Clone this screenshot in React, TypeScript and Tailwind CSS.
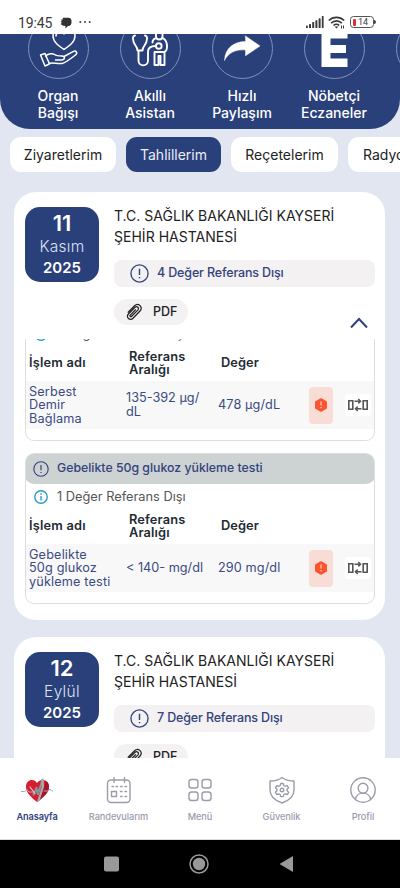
import type { ReactNode } from "react";
import clsx from "clsx";

type TestRow = {
  name: string[];
  range: string[];
  value: string;
};

const IRON_ROW: TestRow = {
  name: ["Serbest", "Demir", "Bağlama"],
  range: ["135-392 µg/", "dL"],
  value: "478 µg/dL",
};

const GLUCOSE_ROW: TestRow = {
  name: ["Gebelikte", "50g glukoz", "yükleme testi"],
  range: ["< 140- mg/dl"],
  value: "290 mg/dl",
};

function AlertCircle({ className }: { className?: string }) {
  return (
    <svg viewBox="0 0 20 20" fill="none" stroke="currentColor" className={className}>
      <circle cx="10" cy="10" r="9" strokeWidth="1.4" />
      <path d="M10 5v6.5M10 13.6v1.5" strokeWidth="1.5" />
    </svg>
  );
}

function PaperClip() {
  return (
    <svg
      viewBox="0 0 18 18"
      fill="none"
      stroke="#222"
      strokeWidth="1.25"
      strokeLinecap="round"
      strokeLinejoin="round"
      className="h-[18px] w-[18px]"
    >
      <path d="M3.2 9.2 9.6 2.8c3.6-3.6 9 1.400 5.400 5.200l-7 7.200c-3 3-7.600-1-4.600-4.200l6.600-6.600c2-2 4.800.6 2.800 2.700L6.600 13.300c-1 1-2.200-.2-1.300-1.200l5.200-5.300" />
    </svg>
  );
}

function StatusBar() {
  return (
    <div className="flex h-[34px] shrink-0 items-start bg-white pl-[18px] pr-6 pt-[14px] text-[#3a3a3a]">
      <span className="w-[35px] whitespace-nowrap font-['Roboto'] text-[14px] leading-[18px] tracking-[-0.1px]">
        19:45
      </span>
      <svg viewBox="0 0 12 12" className="ml-[7px] mt-[3px] h-3 w-3" fill="#333">
        <path d="M3 .8h5.5A3.300 3.300 0 0 1 11.500 4v1.600A3.400 3.400 0 0 1 8 9l-2.600 2.500V9C2.500 9 1 8 .8 6.500L2 6 .5 4.800 2 4 .8 2.800l1.700-.4z" />
      </svg>
      <svg viewBox="0 0 12 4" className="ml-[7px] mt-[6px] h-1 w-3" fill="#444">
        <circle cx="1.3" cy="2" r="1" />
        <circle cx="6" cy="2" r="1" />
        <circle cx="10.7" cy="2" r="1" />
      </svg>
      <div className="flex-1" />
      <svg viewBox="0 0 18 12" className="mt-[2px] h-3 w-[18px]" fill="#3a3a3a">
        <rect x="0" y="9.5" width="1.8" height="2.5" rx=".6" />
        <rect x="3" y="8" width="2" height="4" rx=".6" />
        <rect x="6.2" y="6" width="2" height="6" rx=".6" />
        <rect x="9.4" y="4.2" width="2" height="7.8" rx=".6" />
        <rect x="12.6" y="2.3" width="2" height="9.7" rx=".6" />
        <rect x="15.8" y="0" width="1.8" height="12" rx=".6" />
      </svg>
      <svg
        viewBox="0 0 17 13"
        className="ml-[4px] mt-[2px] h-[13px] w-[17px]"
        fill="none"
        stroke="#3a3a3a"
        strokeWidth="1.7"
      >
        <path d="M.8 4.500a11 11 0 0 1 15.400 0M3.200 7.200a7.300 7.300 0 0 1 10.600 0M5.600 9.500a4 4 0 0 1 5.600 0" />
        <path d="M6.500 10.500h4l-2 2z" fill="#3a3a3a" stroke="none" />
        <path d="M13.500 9.500v3M15.500 9.500v3" strokeWidth="1" />
      </svg>
      <div className="ml-[5px] mt-[2px] flex h-[12px] w-[24px] items-center rounded-[3.5px] border border-[#555] pl-[2px]">
        <div className="h-[7px] w-[3px] rounded-[1px] bg-[#d93030]" />
        <span className="ml-[2px] font-['Roboto'] text-[9px] leading-[10px]">14</span>
      </div>
      <div className="mt-[6px] h-1 w-[2px] rounded-r bg-[#444]" />
    </div>
  );
}

function Shortcut({ lines, children }: { lines: string[]; children?: ReactNode }) {
  return (
    <div className="flex w-[92px] shrink-0 flex-col items-center">
      <div className="flex h-[61px] w-[61px] items-center justify-center rounded-full border border-[#8290b8]">
        <svg
          viewBox="0 0 61 61"
          className="h-[61px] w-[61px] shrink-0"
          fill="none"
          stroke="#fff"
          strokeWidth="1.5"
          strokeLinecap="round"
          strokeLinejoin="round"
        >
          {children}
        </svg>
      </div>
      <div className="mt-[9px] whitespace-nowrap text-center text-[14px] font-medium leading-[16.5px] text-white">
        {lines.map((line) => (
          <div key={line}>{line}</div>
        ))}
      </div>
    </div>
  );
}

function ShortcutHeader() {
  return (
    <div className="h-[95px] shrink-0 overflow-hidden rounded-b-[30px] bg-[#2a407b]">
      <div className="-mt-[16px] flex pl-[12px]">
        <Shortcut lines={["Organ", "Bağışı"]}>
          <path d="M36 31.500C31 28 25 24 25 18c0-6 8-8 11-2 3-6 11-4 11 2 0 6-6 10-11 13.500zM28 18c0-2 1-3 2.500-3" />
          <path d="M12.500 37l4.500-1.500 4.500 10.500-4.500 2zM17.500 38c3-2.500 7-3 9-1.500 2 1.500 4.500 1.500 7.500 1.500 3.500 0 3 4-.5 4h-6M21 45.500c4-1.500 7 .5 13 0 2.500-.3 9-5 13.500-8.500 2.500-2 .5-5-2-3.700l-9.500 5.200" />
        </Shortcut>
        <Shortcut lines={["Akıllı", "Asistan"]}>
          <g strokeWidth="1.9">
            <path d="M15 17.500c-3 0-2.500 6 .5 10 1.500 2 2 3.500 2 5h5c0-1.500.5-3 2-5 3-4 3.500-10 .5-10" />
            <path d="M18.500 33v9.500c0 6.500 9.500 6.500 9.500 0V34c0-4.500 3-6 7.500-6" />
            <circle cx="38.800" cy="28" r="2.800" />
            <path d="M36 14v4.500c0 4 6.500 4 6.500 0V14M35 20.500c-2 1-2.500 2.500-2.500 4M43.500 20.500c2.500 1.500 3.500 4 3.500 8 0 3.500-1.500 5.500-3.500 5.500H34.500v13h4V38h2v9h4V34" />
          </g>
        </Shortcut>
        <Shortcut lines={["Hızlı", "Paylaşım"]}>
          <path
            d="M33.500 18l14.500 10-14.500 9.800v-5.800C24 31 16 35 12.500 42.500 13 30 22 23.500 33.500 23.500z"
            fill="#fff"
            strokeWidth=".5"
          />
        </Shortcut>
        <Shortcut lines={["Nöbetçi", "Eczaneler"]}>
          <path
            d="M17.500 6h26v14.500h-17v6.500h15.500v8h-15.500v5.500h17v8.500h-26z"
            fill="#fff"
            stroke="none"
          />
        </Shortcut>
        <Shortcut lines={[]} />
      </div>
    </div>
  );
}

function Tab({ label, active, className }: { label: string; active?: boolean; className: string }) {
  return (
    <button
      className={clsx(
        "h-[35px] shrink-0 whitespace-nowrap rounded-[11px] pb-px text-center text-[14px]",
        active ? "bg-[#2a407b] text-[#e9edf8]" : "bg-white text-[#222]",
        className
      )}
    >
      {label}
    </button>
  );
}

function DateBadge({ day, month, year }: { day: string; month: string; year: string }) {
  return (
    <div className="flex h-[75px] w-[74px] shrink-0 flex-col items-center rounded-[15px] bg-[#2a407b] pt-[3px] text-white">
      <div className="text-[22px] font-semibold leading-[26px]">{day}</div>
      <div className="text-[15.5px] font-light leading-[21px] tracking-[0.3px] text-[#dde3f2]">{month}</div>
      <div className="text-[15px] font-semibold leading-[21px]">{year}</div>
    </div>
  );
}

function ResultSummary(props: { day: string; month: string; year: string; outOfRange: number }) {
  return (
    <div className="flex pl-[11px] pr-[10px] pt-[15px]">
      <DateBadge day={props.day} month={props.month} year={props.year} />
      <div className="ml-[15px] flex-1">
        <div className="-mt-[1px] whitespace-nowrap text-[14px] leading-[20.5px] tracking-[0.02px] text-[#222]">
          T.C. SAĞLIK BAKANLIĞI KAYSERİ
          <br />
          ŞEHİR HASTANESİ
        </div>
        <div className="mt-[13px] flex h-[27px] items-center rounded-[8px] bg-[#f4f1f3] pl-[16px] text-[#33437c]">
          <AlertCircle className="h-[19px] w-[19px]" />
          <span className="ml-[8px] whitespace-nowrap text-[12.5px] font-medium tracking-[-0.15px]">
            {props.outOfRange} Değer Referans Dışı
          </span>
        </div>
        <div className="mt-[12px] flex h-[26px] w-[74px] items-center rounded-full bg-[#f4f1f3] pl-[11px]">
          <PaperClip />
          <span className="ml-[10px] text-[12.5px] font-medium text-[#222]">PDF</span>
        </div>
      </div>
    </div>
  );
}

function CompareIcon() {
  return (
    <div className="flex h-[22px] w-[26px] items-center justify-center rounded bg-white">
      <svg viewBox="0 0 20 14" fill="none" stroke="#555" strokeWidth="1.6" className="h-[14px] w-5">
        <path d="M.8 2.800h4v8.400h-4zM15.200 2.800h4v8.400h-4z" />
        <path d="M6.500 3.200h5.500M10.300 1l2.200 2.200-2.200 2.200M13.500 10.800h-5.500M9.700 8.600l-2.200 2.200 2.200 2.200" strokeWidth="1.5" />
      </svg>
    </div>
  );
}

// Without a title the panel is the scrolled-up one: only its lower part is in view.
function TestPanel({ title, row }: { title?: string; row: TestRow }) {
  return (
    <div
      className={clsx(
        "overflow-hidden border border-[#dcdfe2] bg-white",
        title ? "h-[151px] rounded-[9px]" : "h-[120px] rounded-b-[9px] border-t-0"
      )}
    >
      {title && (
        <div className="-mx-px -mt-px flex h-[31px] items-center rounded-[9px] bg-[#cdd2d3] pl-[8px] text-[#33437c]">
          <AlertCircle className="h-4 w-4" />
          <span className="ml-[8px] whitespace-nowrap text-[12.3px] font-medium">{title}</span>
        </div>
      )}
      <div className="flex h-[24px] items-center pl-[8px] pt-px">
        <svg viewBox="0 0 14 14" fill="none" stroke="#2b9cc4" strokeWidth="1.4" className="h-[14px] w-[14px]">
          <circle cx="7" cy="7" r="6.2" />
          <path d="M7 3.300v1.400M7 6v4.500" />
        </svg>
        <span className="ml-[9px] whitespace-nowrap text-[12.8px] text-[#555]">
          1 Değer Referans Dışı
        </span>
      </div>
      <div className="flex h-[36px] items-center pl-[3px] text-[12.8px] font-semibold leading-[13.5px] text-[#222b33]">
        <div className="w-[100px] tracking-[0.2px]">İşlem adı</div>
        <div className="w-[92px] tracking-[0.15px]">
          Referans
          <br />
          Aralığı
        </div>
        <div className="tracking-[0.1px]">Değer</div>
      </div>
      <div className="flex h-[48px] items-center bg-[#f8f8f9] pl-[3px] text-[12.7px] leading-[13.3px] text-[#3b4b80]">
        <div className="w-[97px] whitespace-nowrap tracking-[0.15px]">
          {row.name.map((line) => (
            <div key={line}>{line}</div>
          ))}
        </div>
        <div className="w-[92px] whitespace-nowrap leading-[14.5px]">
          {row.range.map((line) => (
            <div key={line}>{line}</div>
          ))}
        </div>
        <div className="w-[91px] whitespace-nowrap tracking-[0.1px]">{row.value}</div>
        <div className="flex h-[37px] w-[24px] items-center justify-center rounded-[4px] bg-[#f8dcd6]">
          <svg viewBox="0 0 14 14" className="h-[14px] w-[14px]">
            <path
              d="M7 1l5.200 3v6L7 13l-5.200-3V4z"
              fill="#fb5430"
              stroke="#fb5430"
              strokeWidth="1.5"
              strokeLinejoin="round"
            />
            <path d="M7 3.500v4M7 9v1.300" stroke="#fbd5cb" strokeWidth="1.2" />
          </svg>
        </div>
        <div className="ml-[12px]">
          <CompareIcon />
        </div>
      </div>
    </div>
  );
}

function NavItem({ label, active, children }: { label: string; active?: boolean; children: ReactNode }) {
  return (
    <div className="flex w-[81.5px] shrink-0 flex-col items-center pt-[17px]">
      <svg
        viewBox="0 0 32 30"
        className="h-[30px] w-8"
        fill="none"
        stroke="#9a9cab"
        strokeWidth="1.4"
        strokeLinecap="round"
        strokeLinejoin="round"
      >
        {children}
      </svg>
      <div
        className={clsx(
          "mt-[5px] whitespace-nowrap text-[9.2px] leading-[14px]",
          active ? "font-semibold tracking-[-0.1px] text-[#33437c]" : "font-medium tracking-[-0.05px] text-[#9a9cab]"
        )}
      >
        {label}
      </div>
    </div>
  );
}

function BottomNav() {
  return (
    <div className="flex h-[82px] shrink-0 justify-center overflow-hidden border-b border-[#dcdce0] bg-white">
      <NavItem label="Anasayfa" active>
        <path d="M16 27C10 22 5 18 5 11.500c0-7 8-8.500 11-3.500 3-5 12-3.500 12 3.500C28 18 22 22 16 27z" fill="#d51f30" stroke="none" />
        <path d="M17 26.500c6-5 11-8.500 11-15 0-3-1.500-5-4-6 1 8-6 11-7 21z" fill="#a91427" stroke="none" />
        <path d="M0 16.500h4l2-2 2 2.500h4M23 16h4l2-2 1.500 2h1.500" stroke="#a8adaf" strokeWidth="1" />
        <path d="M12.500 19.500l3-6.500 1.500 6 4.500-14" stroke="#8a9496" strokeWidth="2.2" />
        <path d="M21.500 4.500l.5 7-4.500 14" stroke="#a7afb1" strokeWidth="2.2" />
        <path d="M9 12l5 6.500" stroke="#e9c7ca" strokeWidth="1.2" />
      </NavItem>
      <NavItem label="Randevularım">
        <rect x="4.5" y="5" width="22.5" height="22.5" rx="3.5" />
        <path d="M11 2.500v5M21.500 2.500v5M8.500 16.500h5v5h-5z" />
        <path d="M9 11.500h1.500M13 11.500h1.500M17.500 11.500H19M22 11.500h1.500M17.500 16.500H19M22 16.500h1.500M17.500 21.500H19M22 21.500h1.500" />
      </NavItem>
      <NavItem label="Menü">
        <rect x="5" y="4.5" width="9" height="8.5" rx="2.5" />
        <rect x="18" y="4.5" width="9" height="8.5" rx="2.5" />
        <rect x="5" y="17" width="9" height="8.5" rx="2.5" />
        <rect x="18" y="17" width="9" height="8.5" rx="2.5" />
      </NavItem>
      <NavItem label="Güvenlik">
        <path d="M16 2.500c3 2.500 7 3.500 12 3.500v9c0 6-5 10.500-12 13C9 25.500 4 21 4 15V6c5 0 9-1 12-3.500z" />
        <path d="M14.800 8.500h2.400l.6 2 1.500.8 2-.7 1.300 2.200-1.500 1.500v1.500l1.500 1.500-1.300 2.200-2-.7-1.500.8-.6 2h-2.400l-.6-2-1.500-.8-2 .7-1.300-2.200 1.500-1.500v-1.500l-1.500-1.500 1.300-2.200 2 .7 1.500-.8z" />
        <circle cx="16" cy="15" r="1.8" />
      </NavItem>
      <NavItem label="Profil">
        <circle cx="16" cy="15" r="12.2" />
        <circle cx="16" cy="13.2" r="4.9" />
        <path d="M8.500 24.500c.5-8.500 14.500-8.500 15 0" />
      </NavItem>
    </div>
  );
}

function SystemNav() {
  return (
    <div className="flex h-12 shrink-0 items-center justify-center gap-[68px] bg-black pr-[3px]">
      <svg viewBox="0 0 20 20" className="h-5 w-5" fill="#999">
        <rect x="3" y="2.5" width="15" height="15" rx="2" />
      </svg>
      <svg viewBox="0 0 20 20" className="h-5 w-5" fill="#999">
        <circle cx="10" cy="10" r="9" fill="none" stroke="#999" strokeWidth="1.5" />
        <circle cx="10" cy="10" r="6.2" />
      </svg>
      <svg viewBox="0 0 20 20" className="h-5 w-5" fill="#999">
        <path d="M16 2v16L2.500 10z" />
      </svg>
    </div>
  );
}

export default function App() {
  return (
    <div className="flex h-[888px] w-[400px] flex-col overflow-hidden bg-[#e2e6f0] font-['Inter',sans-serif]">
      <StatusBar />
      <ShortcutHeader />

      <div className="mt-[8px] flex h-[35px] shrink-0 gap-[10px] overflow-hidden pl-[10px]">
        <Tab label="Ziyaretlerim" className="w-[106px]" />
        <Tab label="Tahlillerim" active className="w-[95px]" />
        <Tab label="Reçetelerim" className="w-[107px]" />
        <Tab label="Radyoloji" className="w-[90px]" />
      </div>

      <main className="mt-[20px] flex min-h-0 flex-1 flex-col overflow-hidden pl-[14px] pr-[15px]">
        <section className="h-[428px] shrink-0 rounded-[22px] bg-white">
          <ResultSummary day="11" month="Kasım" year="2025" outOfRange={4} />
          <div className="-mt-[8px] flex justify-end pr-[16px]">
            <svg viewBox="0 0 20 12" className="h-3 w-5" fill="none" stroke="#2a407b" strokeWidth="1.9">
              <path d="M2 10.500l8-8.500 8 8.500" />
            </svg>
          </div>
          <div className="mt-[10px] overflow-hidden pl-[11px] pr-[10px]">
            <div className="-mt-[18px] flex flex-col gap-[12px]">
              <TestPanel row={IRON_ROW} />
              <TestPanel title="Gebelikte 50g glukoz yükleme testi" row={GLUCOSE_ROW} />
            </div>
          </div>
        </section>

        <section className="mt-[17px] h-[300px] shrink-0 rounded-t-[22px] bg-white">
          <ResultSummary day="12" month="Eylül" year="2025" outOfRange={7} />
        </section>
      </main>

      <BottomNav />
      <SystemNav />
    </div>
  );
}
